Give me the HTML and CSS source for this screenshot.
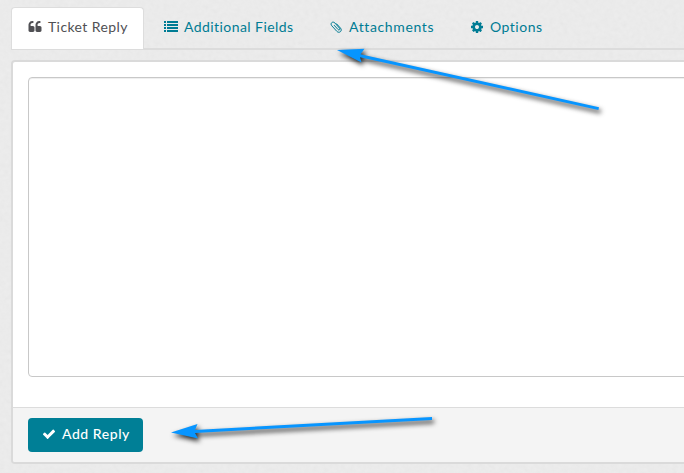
FILE: index.html
```html
<!DOCTYPE html>
<html lang="en">
<head>
<meta charset="utf-8">
<title>Ticket Reply</title>
<link rel="stylesheet" href="styles.css">
</head>
<body>
<svg class="texture" aria-hidden="true"><filter id="grain"><feTurbulence type="fractalNoise" baseFrequency="0.22" numOctaves="3" seed="4"/><feColorMatrix type="matrix" values=".33 .33 .33 0 0 .33 .33 .33 0 0 .33 .33 .33 0 0 0 0 0 0 1"/></filter><rect width="100%" height="100%" filter="url(#grain)"/></svg>
<main class="page">
  <nav class="tabs">
    <a class="tab active"><svg class="icon" viewBox="0 0 1792 1792"><path d="M832 960v384q0 80-56 136t-136 56h-384q-80 0-136-56t-56-136v-704q0-104 40.500-198.500t109.500-163.500 163.500-109.500 198.500-40.500h64q26 0 45 19t19 45v128q0 26-19 45t-45 19h-64q-106 0-181 75t-75 181v32q0 40 28 68t68 28h224q80 0 136 56t56 136zm896 0v384q0 80-56 136t-136 56h-384q-80 0-136-56t-56-136v-704q0-104 40.500-198.500t109.500-163.500 163.500-109.500 198.500-40.500h64q26 0 45 19t19 45v128q0 26-19 45t-45 19h-64q-106 0-181 75t-75 181v32q0 40 28 68t68 28h224q80 0 136 56t56 136z"/></svg><span class="reply">Ticket Reply</span></a>
    <a class="tab fields"><svg class="icon" viewBox="0 0 14 14"><path d="M0 1h2v2H0zM3 1h11v2H3zM0 4h2v2H0zM3 4h11v2H3zM0 7h2v2H0zM3 7h11v2H3zM0 10h2v2H0zM3 10h11v2H3z"/></svg><span class="additional">Additional Fields</span></a>
    <a class="tab attach"><svg class="icon clip" viewBox="0 0 14 14"><path d="M5 5.100l4 4.400c1.100 1.100 2.500-.2 1.500-1.300L6 3.100C3.800.6.700 3.400 2.800 5.800l5 5.500c2.500 2.600 6-.5 3.700-3.200L7.300 3.500"/></svg><span class="attachments">Attachments</span></a>
    <a class="tab options"><svg class="icon" viewBox="0 0 1792 1792"><path d="M1152 896q0-106-75-181t-181-75-181 75-75 181 75 181 181 75 181-75 75-181zm512-109v222q0 12-8 23t-20 13l-185 28q-19 54-39 91 35 50 107 138 10 12 10 25t-9 23q-27 37-99 108t-94 71q-12 0-26-9l-138-108q-44 23-91 38-16 136-29 186-7 28-36 28h-222q-14 0-24.500-8.500t-11.500-21.500l-28-184q-49-16-90-37l-141 107q-10 9-25 9-14 0-25-11-126-114-165-168-7-10-7-23 0-12 8-23 15-21 51-66.500t54-70.500q-27-50-41-99l-183-27q-13-2-21-12.500t-8-23.500v-222q0-12 8-23t19-13l186-28q14-46 39-92-40-57-107-138-10-12-10-24 0-10 9-23 26-36 98.500-107.500t94.500-71.500q13 0 26 10l138 107q44-23 91-38 16-136 29-186 7-28 36-28h222q14 0 24.500 8.500t11.500 21.500l28 184q49 16 90 37l142-107q9-9 24-9 13 0 25 10 129 119 165 170 7 8 7 22 0 12-8 23-15 21-51 66.500t-54 70.500q26 50 41 98l183 28q13 2 21 12.500t8 23.500z"/></svg><span class="option">Options</span></a>
  </nav>
  <section class="panel">
    <div class="body"><div class="editor" contenteditable="true"></div></div>
    <footer class="footer">
      <button class="submit"><svg class="icon" viewBox="0 0 1792 1792"><path d="M1671 566q0 40-28 68l-724 724-136 136q-28 28-68 28t-68-28l-136-136-362-362q-28-28-28-68t28-68l136-136q28-28 68-28t68 28l294 295 656-657q28-28 68-28t68 28l136 136q28 28 28 68z"/></svg><span class="add">Add Reply</span></button>
    </footer>
  </section>
</main>
<svg class="arrows" viewBox="0 0 684 473" aria-hidden="true">
  <g><path d="M337 50L364.500 48.700 360.500 54.300 599 107.200 598.400 110 360 57.300 361.500 62.500z"/></g>
  <g><path d="M171 432.500L197.500 424 195 430 432 417 432 420 195 433 198 438.500z"/></g>
</svg>
</body>
</html>
```

FILE: styles.css
```css
* { box-sizing: border-box; }
body {
  margin: 0;
  height: 473px;
  overflow: hidden;
  background: #eeeeee;
  font: 14px/20px Lato, "Open Sans", sans-serif;
  color: #4c4c50;
}
.texture {
  position: absolute;
  inset: 0;
  width: 100%;
  height: 100%;
  opacity: .055;
}
.page { position: relative; padding: 7px 0 0 11px; }
.tabs {
  display: flex;
  height: 43px;
  border-bottom: 2px solid #dcdcdc;
}
.tab {
  display: flex;
  align-items: center;
  height: 40px;
  gap: 6px;
  color: #007c94;
  white-space: nowrap;
}
.tab.active {
  width: 133px;
  height: 42px;
  padding: 0 0 3px 16px;
  color: #505054;
  background: #fff;
  border: 1px solid #ddd;
  border-bottom: 0;
  border-radius: 4px 4px 0 0;
}
.fields { margin-left: 20px; width: 165px; }
.attach { width: 141px; }
.icon { display: block; width: 14px; height: 14px; flex: none; fill: currentColor; }
.clip { fill: none; stroke: currentColor; stroke-width: 1; }
.reply { letter-spacing: .4px; }
.additional { letter-spacing: .43px; }
.attachments { letter-spacing: .62px; }
.option { letter-spacing: .5px; }
.panel {
  width: 690px;
  height: 404px;
  margin-top: 10px;
  border: 2px solid #dadada;
  border-radius: 4px;
  background: #fff;
  overflow: hidden;
}
.body { height: 345px; padding: 15px; }
.editor {
  width: 700px;
  height: 300px;
  border: 1px solid #c8c8c8;
  border-radius: 4px;
  box-shadow: inset 0 1px 1px #eee;
}
.footer {
  height: 55px;
  padding: 10px 15px;
  background: #f4f4f4;
  border-top: 1px solid #dcdcdc;
}
.submit {
  display: flex;
  align-items: center;
  gap: 6px;
  width: 115px;
  height: 34px;
  padding: 0 0 2px 14px;
  border: 0;
  border-radius: 4px;
  background: #007f96;
  color: #fff;
  font: inherit;
  font-weight: 500;
}
.add { letter-spacing: .55px; white-space: nowrap; }
.arrows { position: absolute; inset: 0; width: 684px; height: 473px; pointer-events: none; }
.arrows g { fill: #0795ff; filter: drop-shadow(2px 3px 2.5px rgba(0, 0, 0, .85)); }
```
